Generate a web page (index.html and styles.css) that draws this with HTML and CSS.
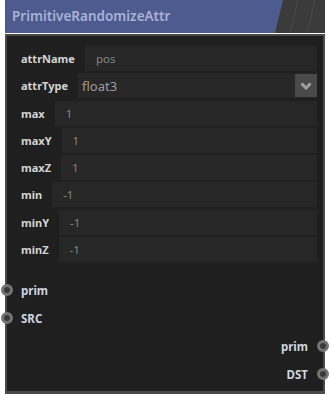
FILE: index.html
```html
<!DOCTYPE html>
<html lang="en">
<head>
    <meta charset="UTF-8">
    <title>PrimitiveRandomizeAttr</title>
    <link rel="stylesheet" href="styles.css">
</head>
<body>
    <div class="node">
        <div class="head">
            <span class="title">PrimitiveRandomizeAttr</span>
            <svg class="deco" width="50" height="33" viewBox="0 0 50 33">
                <polygon points="8,0 50,0 50,33 0,33" fill="#3b3b3b"/>
                <line x1="23" y1="0" x2="15" y2="33" stroke="#4a4a4a" stroke-width="1"/>
                <line x1="40" y1="0" x2="32" y2="33" stroke="#4a4a4a" stroke-width="1"/>
            </svg>
        </div>
        <div class="body">
            <div class="params">
                <div class="row"><span class="lbl">attrName</span><div class="field">pos</div></div>
                <div class="row">
                    <span class="lbl">attrType</span>
                    <div class="field select">
                        <span class="val">float3</span>
                        <span class="caret">
                            <svg width="12" height="8" viewBox="0 0 12 8"><polyline points="1.5,1.5 6,6 10.5,1.5" fill="none" stroke="#a0a0a0" stroke-width="3"/></svg>
                        </span>
                    </div>
                </div>
                <div class="row"><span class="lbl">max</span><div class="field">1</div></div>
                <div class="row"><span class="lbl">maxY</span><div class="field">1</div></div>
                <div class="row"><span class="lbl">maxZ</span><div class="field">1</div></div>
                <div class="row"><span class="lbl">min</span><div class="field">-1</div></div>
                <div class="row"><span class="lbl">minY</span><div class="field">-1</div></div>
                <div class="row"><span class="lbl">minZ</span><div class="field">-1</div></div>
            </div>
            <div class="sockets">
                <div class="sock in"><i class="dot"></i>prim</div>
                <div class="sock in"><i class="dot"></i>SRC</div>
                <div class="sock out">prim<i class="dot"></i></div>
                <div class="sock out">DST<i class="dot"></i></div>
            </div>
        </div>
    </div>
</body>
</html>
```

FILE: styles.css
```css
/* node editor card */
body {
    margin: 0;
    background-color: #fff;
    font-family: "Noto Sans", sans-serif;
}

.node {
    width: 320px;
    margin-left: 5px;
}

.head {
    display: flex;
    height: 33px;
    margin-bottom: 1px;
    background-color: #4e5b8f;
}

.title {
    flex: 1;
    padding-left: 7px;
    line-height: 33px;
    font-size: 13.5px;
    font-weight: 600;
    color: #a9b1d6;
}

.deco {
    display: block;
}

.body {
    height: 360px;
    box-sizing: border-box;
    background-color: #1f1f1f;
    border: 2px solid #4a4a4a;
    border-bottom-width: 3px;
}

.params {
    display: flex;
    flex-direction: column;
    gap: 2.3px;
    padding: 10px 6px 0 14px;
}

.row {
    display: flex;
    align-items: center;
    gap: 10px;
    height: 25px;
}

.lbl {
    font-size: 11px;
    font-weight: 700;
    color: #d4d4d4;
}

.field {
    flex: 1;
    display: flex;
    align-items: center;
    height: 25px;
    padding-left: 11px;
    background-color: #272727;
    font-size: 11.5px;
    color: #868686;
}

.field.select {
    padding-left: 4px;
}

.select .val {
    font-size: 13px;
    color: #9c9c9c;
}

.caret {
    display: flex;
    align-items: center;
    justify-content: center;
    width: 22px;
    height: 23px;
    margin-left: auto;
    background-color: #4a4a4a;
}

.sockets {
    margin-top: 14px;
}

.sock {
    position: relative;
    display: flex;
    align-items: center;
    height: 28px;
    padding-left: 14px;
    font-size: 11.5px;
    font-weight: 700;
    color: #cdd5e0;
}

.sock.out {
    justify-content: flex-end;
    padding-left: 0;
    padding-right: 15px;
}

.dot {
    position: absolute;
    top: 50%;
    width: 12px;
    height: 12px;
    margin-top: -6px;
    box-sizing: border-box;
    border: 3px solid #747474;
    border-radius: 50%;
    background-color: #3a3a3a;
}

.in .dot {
    left: -6px;
}

.out .dot {
    right: -6px;
}
```
